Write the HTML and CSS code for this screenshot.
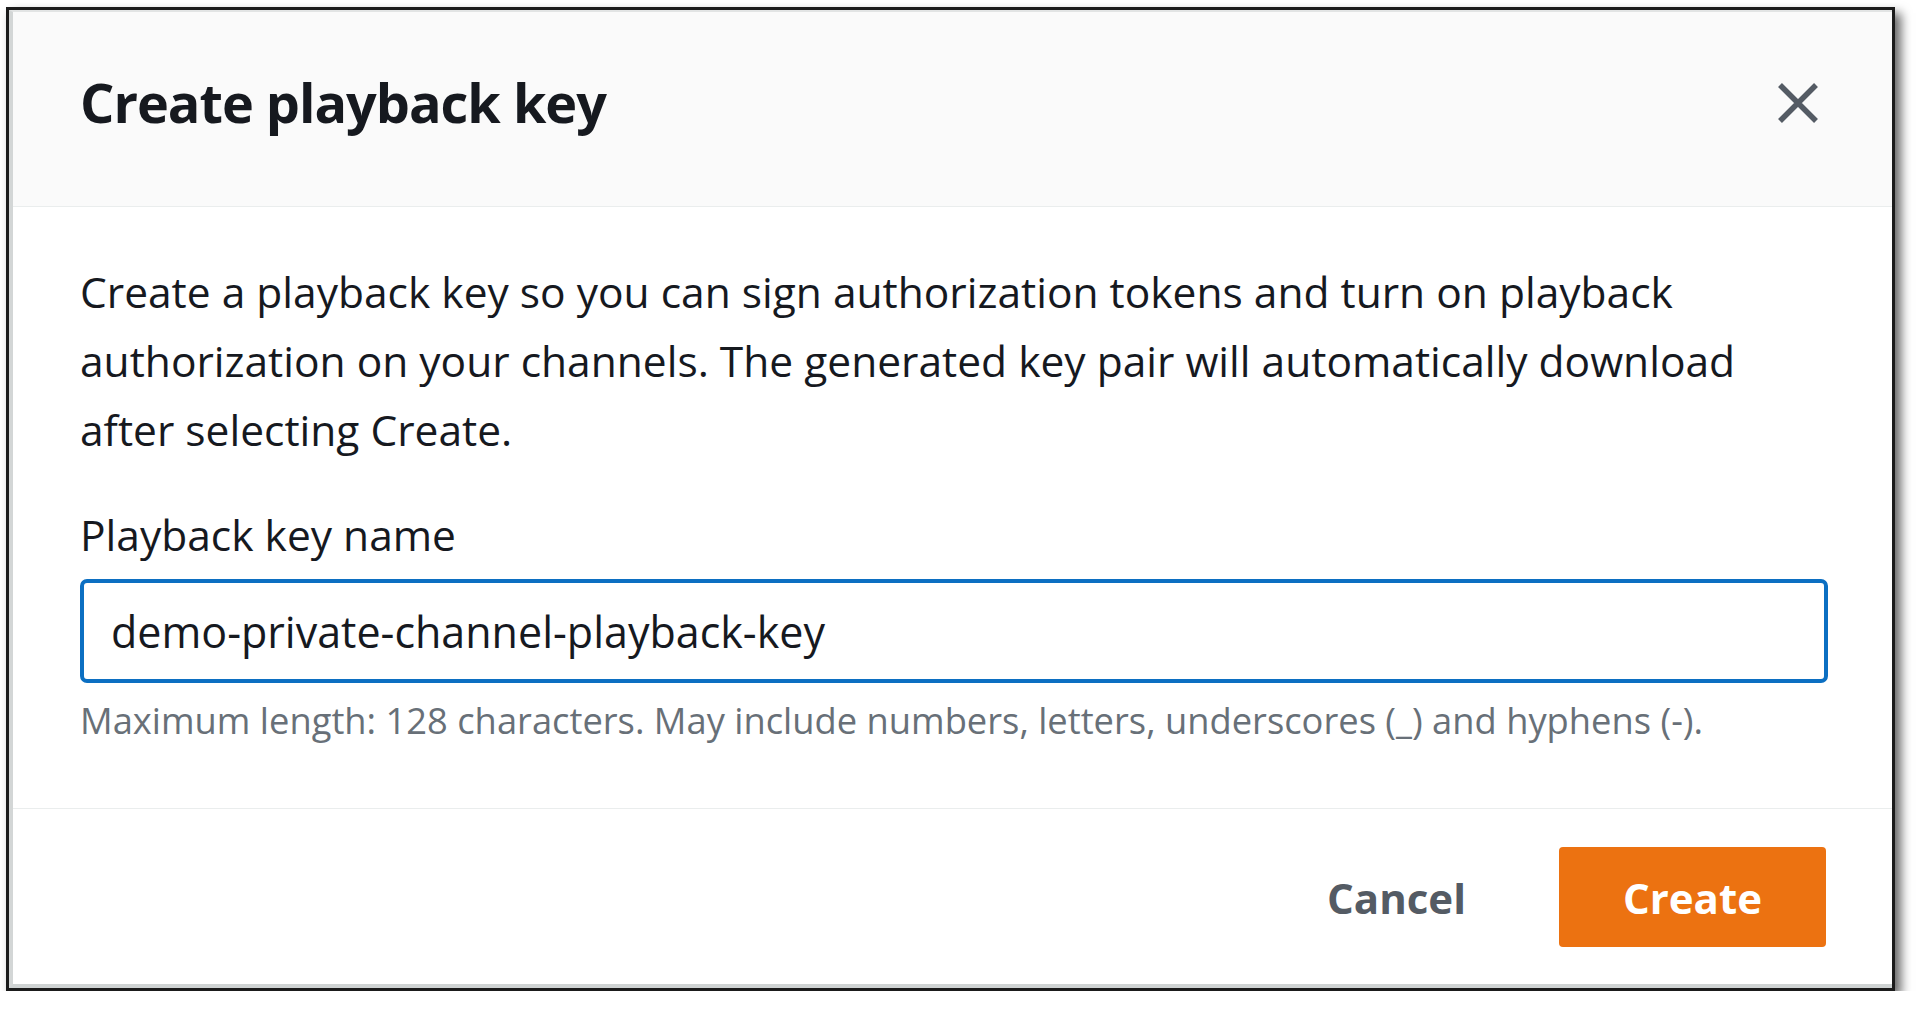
FILE: index.html
```html
<!DOCTYPE html>
<html lang="en">
<head>
<meta charset="utf-8">
<title>Create playback key</title>
<link rel="stylesheet" href="styles.css">
</head>
<body>
<div class="frame">
  <div class="modal">
    <header class="modal-header">
      <h2 class="modal-title">Create playback key</h2>
      <button class="close-btn" aria-label="Close">
        <svg width="42" height="42" viewBox="0 0 42 42"><path d="M3 3 L39 39 M39 3 L3 39" stroke="#545b64" stroke-width="5.5" fill="none"/></svg>
      </button>
    </header>
    <div class="modal-body">
      <p class="desc">Create a playback key so you can sign authorization tokens and turn on playback authorization on your channels. The generated key pair will automatically download after selecting Create.</p>
      <label class="field-label">Playback key name</label>
      <div class="input">demo-private-channel-playback-key</div>
      <p class="hint">Maximum length: 128 characters. May include numbers, letters, underscores (_) and hyphens (-).</p>
    </div>
    <footer class="modal-footer">
      <button class="btn-link">Cancel</button>
      <button class="btn-primary">Create</button>
    </footer>
  </div>
</div>
</body>
</html>
```
FILE: styles.css
```css
html, body {
  margin: 0;
  padding: 0;
  background: #ffffff;
}
body {
  font-family: "Open Sans", "Liberation Sans", sans-serif;
  color: #16191f;
}
.frame {
  margin: 7px 0 0 6px;
  width: 1883px;
  border: 3px solid #1b1b1b;
  box-shadow: 6px 6px 10px rgba(0, 0, 0, 0.6);
}
.modal {
  border-left: 4px solid #d3d6d6;
  border-top: 2px solid #e2e4e4;
  border-bottom: 4px solid #cfd3d3;
  background: #ffffff;
}
.modal-header {
  height: 194px;
  background: #fafafa;
  border-bottom: 1px solid #eaeded;
  display: flex;
  align-items: center;
  justify-content: space-between;
  padding: 0 73px 0 67px;
}
.modal-title {
  margin: 0;
  font-size: 54px;
  letter-spacing: -1px;
  font-weight: 700;
  color: #16191f;
  padding-bottom: 14px;
}
.close-btn {
  border: 0;
  background: none;
  padding: 0;
  width: 42px;
  height: 42px;
  margin-bottom: 12px;
  display: flex;
}
.modal-body {
  padding: 50px 64px 62px 67px;
}
.desc {
  margin: 0;
  font-size: 42.5px;
  line-height: 69px;
}
.field-label {
  display: block;
  margin-top: 36px;
  font-size: 42.5px;
  line-height: 69px;
}
.input {
  margin-top: 10px;
  height: 96px;
  border: 4.5px solid #0c6fc2;
  border-radius: 7px;
  display: flex;
  align-items: center;
  padding: 0 27px;
  font-size: 43px;
}
.hint {
  margin: 11px 0 0;
  font-size: 36.3px;
  line-height: 52px;
  color: #687078;
}
.modal-footer {
  border-top: 1px solid #eaeded;
  display: flex;
  justify-content: flex-end;
  align-items: center;
  gap: 93px;
  padding: 38px 66px 37px 0;
}
.btn-link {
  border: 0;
  background: none;
  padding: 0;
  font-family: inherit;
  font-size: 42px;
  font-weight: 700;
  color: #545b64;
}
.btn-primary {
  border: 0;
  background: #ec7211;
  color: #ffffff;
  border-radius: 4px;
  width: 267px;
  height: 100px;
  font-family: inherit;
  font-size: 42px;
  font-weight: 700;
}
```
